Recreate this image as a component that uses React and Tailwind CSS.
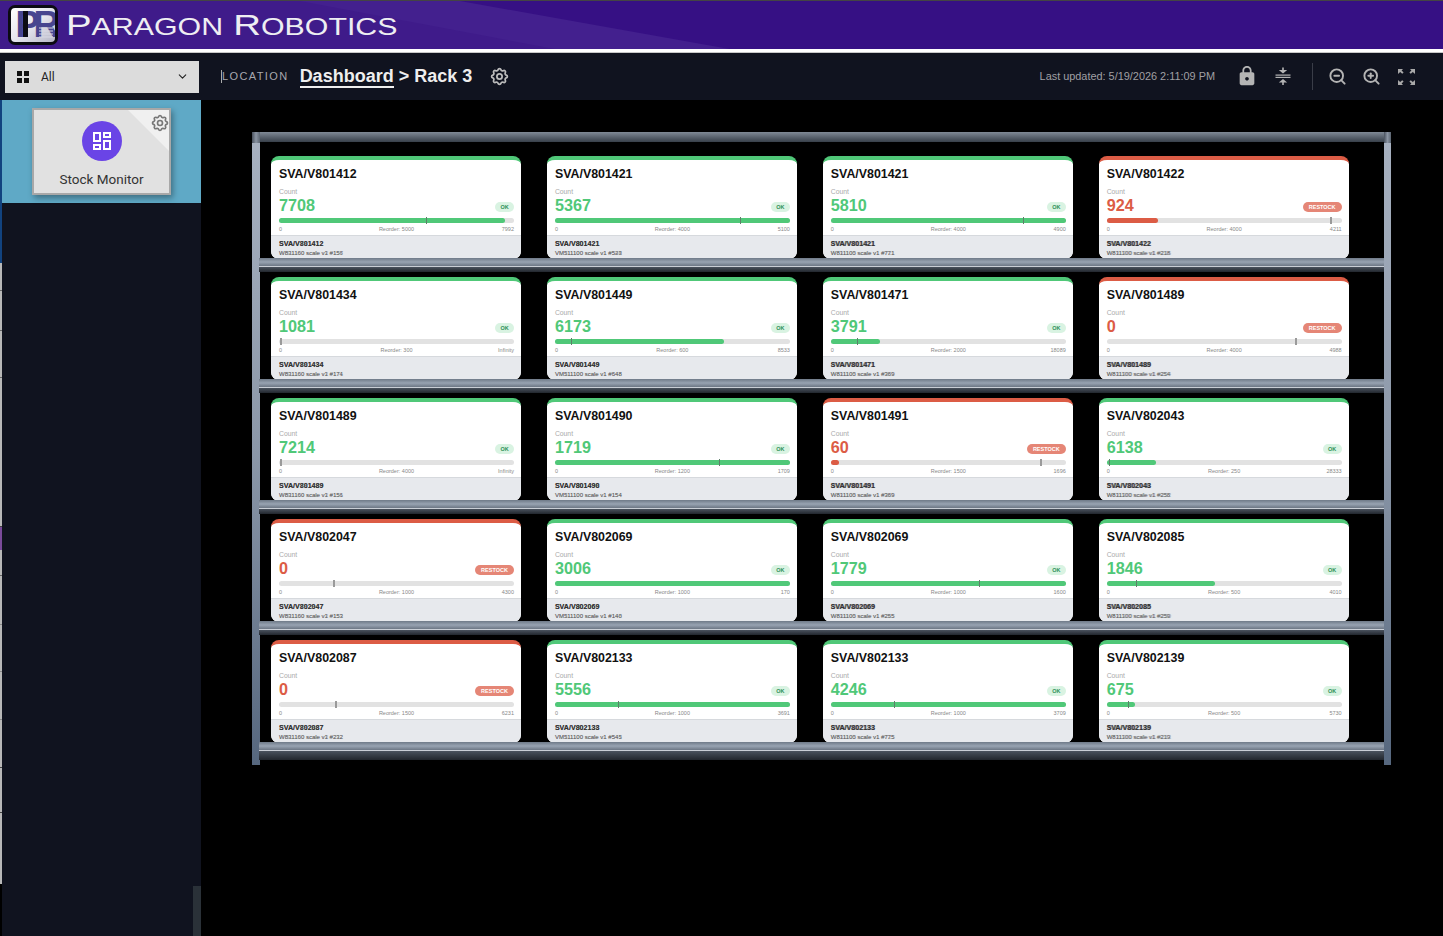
import React from "react";
import { ChevronDown, ZoomIn, ZoomOut } from "lucide-react";
import { HiOutlineCog } from "react-icons/hi";
import { MdLock, MdOutlineDashboard } from "react-icons/md";

// fill / mark are percentages of the bar
const rows = [
  [
    { id: "SVA/V801412", ghost: "SVA/V781412", sub: "W831160 scale v1 #156", ghostSub: "WB11100 scale v3 #157", count: 7708, fill: 96, mark: 62.5, reorder: 5000, max: 7992 },
    { id: "SVA/V801421", ghost: "SVA/V801421", sub: "VM511100 scale v1 #523", ghostSub: "VM311100 scale v1 #548", count: 5367, fill: 100, mark: 78.6, reorder: 4000, max: 5100 },
    { id: "SVA/V801421", ghost: "8VA/V801421", sub: "W811100 scale v1 #771", ghostSub: "W831105 scale v1 #721", count: 5810, fill: 100, mark: 82, reorder: 4000, max: 4900 },
    { id: "SVA/V801422", ghost: "5VA/V801472", sub: "W811100 scale v1 #218", ghostSub: "W831300 scale v1 #216", count: 924, fill: 22, mark: 95, reorder: 4000, max: 4211, low: true },
  ],
  [
    { id: "SVA/V801434", ghost: "SVA/V781434", sub: "W831160 scale v1 #174", ghostSub: "WB11100 scale v3 #171", count: 1081, fill: 0, mark: 0.5, reorder: 300, max: "Infinity" },
    { id: "SVA/V801449", ghost: "SVA/V801449", sub: "VM511100 scale v1 #648", ghostSub: "VM311100 scale v1 #548", count: 6173, fill: 72, mark: 7, reorder: 600, max: 8533 },
    { id: "SVA/V801471", ghost: "8VA/V801471", sub: "W811100 scale v1 #369", ghostSub: "W831105 scale v1 #389", count: 3791, fill: 21, mark: 11, reorder: 2000, max: 18089 },
    { id: "SVA/V801489", ghost: "5VA/V801488", sub: "W811100 scale v1 #254", ghostSub: "W831300 scale v1 #204", count: 0, fill: 0, mark: 80, reorder: 4000, max: 4988, low: true },
  ],
  [
    { id: "SVA/V801489", ghost: "SVA/V781489", sub: "W831160 scale v1 #156", ghostSub: "WB11100 scale v3 #151", count: 7214, fill: 0, mark: 0.5, reorder: 4000, max: "Infinity" },
    { id: "SVA/V801490", ghost: "SVA/V801498", sub: "VM511100 scale v1 #154", ghostSub: "VM311100 scale v1 #154", count: 1719, fill: 100, mark: 70, reorder: 1200, max: 1709 },
    { id: "SVA/V801491", ghost: "8VA/V801491", sub: "W811100 scale v1 #369", ghostSub: "W831105 scale v1 #389", count: 60, fill: 3.5, mark: 89, reorder: 1500, max: 1696, low: true },
    { id: "SVA/V802043", ghost: "5VA/V802048", sub: "W811100 scale v1 #258", ghostSub: "W831300 scale v1 #252", count: 6138, fill: 21, mark: 1, reorder: 250, max: 28333 },
  ],
  [
    { id: "SVA/V802047", ghost: "SVA/V792947", sub: "W831160 scale v1 #153", ghostSub: "WB11100 scale v3 #153", count: 0, fill: 0, mark: 23, reorder: 1000, max: 4300, low: true },
    { id: "SVA/V802069", ghost: "SVA/V802069", sub: "VM511100 scale v1 #140", ghostSub: "VM311100 scale v1 #148", count: 3006, fill: 100, reorder: 1000, max: 170 },
    { id: "SVA/V802069", ghost: "8VA/V802069", sub: "W811100 scale v1 #255", ghostSub: "W831105 scale v1 #265", count: 1779, fill: 100, mark: 63, reorder: 1000, max: 1600 },
    { id: "SVA/V802085", ghost: "5VA/V802088", sub: "W811100 scale v1 #259", ghostSub: "W831300 scale v1 #250", count: 1846, fill: 46, mark: 12.5, reorder: 500, max: 4010 },
  ],
  [
    { id: "SVA/V802087", ghost: "SVA/V792887", sub: "W831160 scale v1 #232", ghostSub: "WB11100 scale v3 #212", count: 0, fill: 0, mark: 24, reorder: 1500, max: 6231, low: true },
    { id: "SVA/V802133", ghost: "SVA/V802138", sub: "VM511100 scale v1 #545", ghostSub: "VM311100 scale v1 #543", count: 5556, fill: 100, mark: 27, reorder: 1000, max: 3691 },
    { id: "SVA/V802133", ghost: "8VA/V802133", sub: "W811100 scale v1 #775", ghostSub: "W831105 scale v1 #725", count: 4246, fill: 100, mark: 27, reorder: 1000, max: 3709 },
    { id: "SVA/V802139", ghost: "5VA/V802138", sub: "W811100 scale v1 #219", ghostSub: "W831300 scale v1 #213", count: 675, fill: 12, mark: 9, reorder: 500, max: 5730 },
  ],
];

const CompressIcon = () => (
  <svg width="16" height="18" viewBox="0 0 16 18" fill="#b4b4b4">
    <rect x="0.5" y="7.5" width="15" height="1.2" />
    <rect x="0.5" y="9.8" width="15" height="1.2" />
    <rect x="7.2" y="0.5" width="1.6" height="3" />
    <path d="M3.8 3h8.4L8 6.6z" />
    <rect x="7.2" y="15" width="1.6" height="3" />
    <path d="M3.8 15.5h8.4L8 11.9z" />
  </svg>
);

const ExpandIcon = () => (
  <svg width="17" height="16" viewBox="0 0 17 16" fill="#a8a8a8">
    <path d="M0 0h5L3.6 1.4 5.6 3.4 4.2 4.8 2.2 2.9 0 5z" />
    <path d="M17 0h-5l1.4 1.4-2 2 1.4 1.4 2-1.9L17 5z" />
    <path d="M0 16h5l-1.4-1.4 2-2-1.4-1.4-2 1.9L0 11z" />
    <path d="M17 16h-5l1.4-1.4-2-2 1.4-1.4 2 1.9 2.2-2.1z" />
  </svg>
);

const Logo = () => (
  <div className="relative flex h-[40px] w-[50px] items-center justify-center overflow-hidden rounded-[7px] border-[3px] border-[#0b0b12] bg-gradient-to-br from-white via-[#e6e6ee] to-[#b6b6c6]">
    <span className="pl-[3px] text-[36px] font-bold leading-none tracking-[-6px] text-[#47458f]">PR</span>
    <span className="absolute left-[12px] top-[3px] h-[26px] w-[5px] bg-[#0c0c14]" />
    <svg className="absolute bottom-[4px] right-[2px]" width="14" height="12" viewBox="0 0 14 12" stroke="#d8d8e4" strokeWidth="1">
      <path d="M0 2h14M0 5h14M0 8h14M0 11h14" />
    </svg>
  </div>
);

const StockCard = ({ item }) => {
  const color = item.low ? "#dc5c45" : "#50c878";
  const overFill = item.mark < item.fill;
  return (
    <div className="flex h-[103px] flex-col overflow-hidden rounded-lg border-t-4 bg-white" style={{ borderColor: color }}>
      <div className="pl-2 pr-[7px] pt-[6px]">
        <div className="text-[12.4px] font-bold leading-[17px] text-[#111]">{item.id}</div>
        <div className="mt-[5px] text-[6.8px] leading-[8px] text-[#aaa]">Count</div>
        <div className="flex items-center justify-between">
          <div className="text-[16.2px] font-bold leading-[19px]" style={{ color }}>{item.count}</div>
          {item.low ? (
            <span className="mt-[3px] flex h-[10px] w-[39px] items-center justify-center rounded-full bg-[#e58676] text-[5.5px] font-bold text-white">RESTOCK</span>
          ) : (
            <span className="mt-[3px] flex h-[10px] w-[19px] items-center justify-center rounded-full bg-[#d9f3e2] text-[5.5px] font-bold text-[#2f8f57]">OK</span>
          )}
        </div>
        <div className="relative mt-[3px] h-[5px] rounded-full bg-[#e2e2e2]">
          <div className="h-full rounded-full" style={{ width: `${item.fill}%`, backgroundColor: color }} />
          {item.mark !== undefined && (
            <div
              className={overFill ? "absolute top-[-1px] h-[7px] w-[1px] bg-[#5f7f6a]" : "absolute top-[-1px] h-[7px] w-[2px] bg-[#9a9a9a]"}
              style={{ left: `${item.mark}%` }}
            />
          )}
        </div>
        <div className="mt-[2px] grid grid-cols-3 text-[5.5px] leading-[8px] text-[#888]">
          <span>0</span>
          <span className="text-center">Reorder: {item.reorder}</span>
          <span className="text-right">{item.max}</span>
        </div>
      </div>
      <div className="mt-[2px] flex-1 border-t border-[#d6d9dd] bg-[#e7e9ed] px-2 pt-[4px]">
        <div className="grid text-[7.1px] font-bold leading-[9px] text-[#333]">
          <span className="col-start-1 row-start-1">{item.id}</span>
          <span className="col-start-1 row-start-1 opacity-60">{item.ghost}</span>
        </div>
        <div className="grid text-[6px] leading-[8px] text-[#666]">
          <span className="col-start-1 row-start-1">{item.sub}</span>
          <span className="col-start-1 row-start-1 opacity-60">{item.ghostSub}</span>
        </div>
      </div>
    </div>
  );
};

const Post = ({ wide }) => (
  <div className={wide ? "flex h-[633px] w-[8px] flex-col" : "flex h-[633px] w-[7px] flex-col"}>
    <div className="h-[11px] bg-gradient-to-r from-[#4a525e] via-[#8a94a2] to-[#5c6672]" />
    <div className="flex-1 bg-gradient-to-b from-[#a7b1c0] via-[#8b97a8] to-[#56677e]" />
  </div>
);

const Shelf = ({ last }) => (
  <div className={last ? "relative z-10 -ml-[1px] flex h-[18px] flex-col" : "relative z-10 -ml-[1px] flex h-[14px] flex-col"}>
    <div className="h-[8px] bg-gradient-to-b from-[#6f7a88] via-[#98a3b2] to-[#6c7684]" />
    <div className="h-[1px] bg-[#c9ced6]" />
    <div className="flex-1 bg-gradient-to-b from-[#4a525e] to-[#22272e]" />
  </div>
);

const Rack = () => (
  <div className="flex w-[1139px]">
    <Post wide />
    <div className="w-[1124px]">
      <div className="h-[10px] bg-gradient-to-b from-[#808a96] to-[#38404a]" />
      {rows.map((row, i) => (
        <div key={i}>
          <div className={`grid grid-cols-[repeat(4,250px)] gap-x-[25.9px] pl-[11px] ${i === 0 ? "pt-[14px]" : "pt-[5px]"}`}>
            {row.map((item, j) => (
              <StockCard key={j} item={item} />
            ))}
          </div>
          <div className="-mt-[1px]">
            <Shelf last={i === rows.length - 1} />
          </div>
        </div>
      ))}
    </div>
    <Post />
  </div>
);

export default function App() {
  return (
    <div className="flex h-[936px] flex-col overflow-hidden bg-black font-['Liberation_Sans',sans-serif]">
      {/* Brand header */}
      <header className="relative flex h-[49px] items-center overflow-hidden border-t border-[#444] bg-[#361084] pl-[8px]">
        <svg className="absolute inset-0" width="1443" height="49" preserveAspectRatio="none">
          <polygon points="0,0 460,0 735,49 0,49" fill="#43208e" />
          <polygon points="0,0 300,0 560,49 0,49" fill="#3f1b8a" />
        </svg>
        <div className="relative flex items-center">
          <Logo />
          {/* wordmark is an extended face, stretch it */}
          <div className="ml-[8px] flex origin-left scale-x-[1.28] items-baseline text-[#eeeef2]">
            <span className="text-[30px] leading-none">P</span>
            <span className="text-[23.7px] leading-none">ARAGON</span>
            <span className="ml-[8px] text-[30px] leading-none">R</span>
            <span className="text-[23.7px] leading-none">OBOTICS</span>
          </div>
        </div>
      </header>
      <div className="h-[4px] border-b border-[#c8c8c8] bg-white" />

      {/* Location bar */}
      <nav className="flex h-[47px] items-center bg-[#10131f] pl-[5px]">
        <div className="flex h-[32px] w-[194px] items-center bg-[#dcdcdc] pl-[12px] pr-[10px] text-[#222]">
          <div className="grid grid-cols-2 gap-[2px]">
            <span className="h-[5px] w-[5px] bg-[#111]" />
            <span className="h-[5px] w-[5px] bg-[#111]" />
            <span className="h-[5px] w-[5px] bg-[#111]" />
            <span className="h-[5px] w-[5px] bg-[#111]" />
          </div>
          <span className="ml-[12px] flex-1 font-['Roboto',sans-serif] text-[12px]">All</span>
          <ChevronDown size={13} strokeWidth={2} />
        </div>
        <div className="ml-[22px] h-[13px] w-px bg-[#aaa]" />
        <span className="text-[11px] tracking-[1.4px] text-[#a8a8ae]">LOCATION</span>
        <div className="mb-[2px] ml-[11px] text-[18px] font-bold leading-[22px] text-[#eee]">
          <span className="border-b-2 border-[#eee]">Dashboard</span>
          <span> &gt; Rack 3</span>
        </div>
        <HiOutlineCog className="ml-[17px] text-[#bbb]" size={21} />
        <span className="ml-auto text-[10.9px] text-[#a0a0a4]">Last updated: 5/19/2026 2:11:09 PM</span>
        <MdLock className="mb-[2px] ml-[21px] text-[#b4b4b4]" size={22} />
        <div className="mb-[2px] ml-[17px]"><CompressIcon /></div>
        <div className="ml-[21px] h-[27px] w-px bg-[#3a3d48]" />
        <ZoomOut className="ml-[15px] text-[#b4b4b4]" size={19} strokeWidth={2.4} />
        <ZoomIn className="ml-[15px] text-[#b4b4b4]" size={19} strokeWidth={2.4} />
        <div className="ml-[17px] mr-[28px]"><ExpandIcon /></div>
      </nav>

      <div className="flex flex-1">
        {/* Window edge */}
        <div className="flex h-[784px] w-[2px] flex-col bg-[#b8b8b8]">
          <div className="h-[163px] bg-[#12437f]" />
          <div className="h-[28px] border-b border-[#666]" />
          <div className="h-[40px] border-b border-[#666]" />
          <div className="h-[47px] border-b border-[#666]" />
          <div className="h-[149px] border-b border-[#444]" />
          <div className="h-[23px] bg-[#7a4a9a]" />
          <div className="h-[26px] border-b border-[#666]" />
          <div className="h-[49px] border-b border-[#888]" />
          <div className="h-[47px] border-b border-[#888]" />
          <div className="h-[48px] border-b border-[#888]" />
          <div className="h-[48px] border-b border-[#444]" />
          <div className="h-[45px] border-b border-[#444]" />
        </div>

        {/* Sidebar */}
        <aside className="relative w-[199px] bg-[#10131f]">
          <div className="flex h-[103px] justify-center bg-[#5fa9c6] pt-[8px]">
            <div className="relative flex h-[87px] w-[139px] flex-col items-center overflow-hidden border-2 border-[#a8a8a8] bg-[#e1e1e1] shadow-[2px_3px_6px_rgba(0,0,0,0.35)]">
              <div className="absolute right-0 top-0 h-[41px] w-[41px] bg-[#f0f0f0] [clip-path:polygon(0_0,100%_0,100%_100%)]" />
              <HiOutlineCog className="absolute right-[-1px] top-[3px] text-[#777]" size={20} />
              <div className="mt-[11px] flex h-[40px] w-[40px] items-center justify-center rounded-full bg-[#6a44e6] text-white">
                <MdOutlineDashboard size={24} />
              </div>
              <span className="mt-[8px] font-['Roboto',sans-serif] text-[13.5px] text-[#333]">Stock Monitor</span>
            </div>
          </div>
          {/* scrollbar stub */}
          <div className="absolute bottom-0 right-0 h-[50px] w-[8px] bg-[#2a3138]" />
        </aside>

        {/* Rack view */}
        <main className="flex-1 pl-[51px] pt-[32px]">
          <Rack />
        </main>
      </div>
    </div>
  );
}
